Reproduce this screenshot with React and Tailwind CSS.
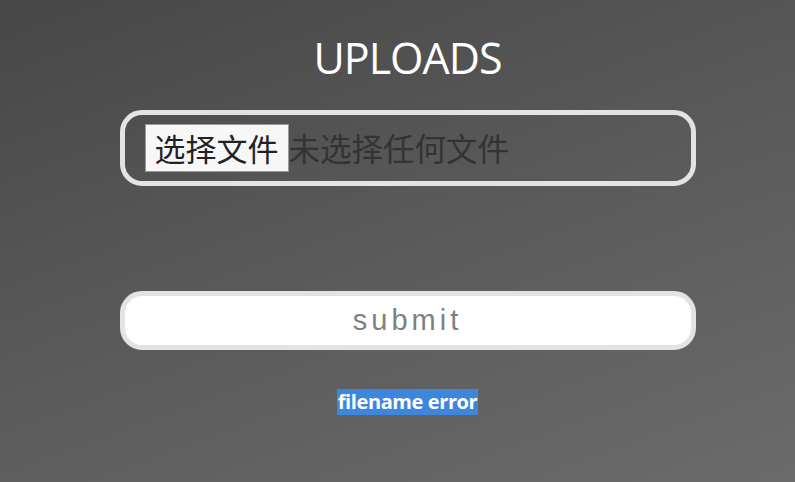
export default function App() {
  return (
    <div className="w-[795px] h-[482px] bg-[linear-gradient(160deg,#474747_0%,#5a5a5a_50%,#6b6b6b_100%)] flex flex-col items-center pl-[20px] font-['Segoe_UI','Open_Sans','Noto_Sans_CJK_SC',sans-serif]">
      <h1 className="mt-[30px] text-white text-[43px] leading-[56px] font-['Open_Sans',sans-serif] tracking-[-1px]">UPLOADS</h1>
      <div className="mt-[24px] w-[576px] h-[76px] border-[5px] border-[#e3e3e3] rounded-[22px] flex items-center pl-[20px]">
        <div className="h-[48px] px-[9px] bg-[#f7f7f7] border border-[#9a9a9a] flex items-center text-[31px] text-[#222] font-['Noto_Sans_CJK_SC',sans-serif]">选择文件</div>
        <span className="text-[31.5px] text-[#333] font-['Noto_Sans_CJK_SC',sans-serif]">未选择任何文件</span>
      </div>
      <div className="mt-[105px] w-[576px] h-[59px] border-[5px] border-[#e3e3e3] bg-white rounded-[22px] flex items-center justify-center">
        <span className="text-[29px] text-[#808080] tracking-[4px] font-['Liberation_Sans',sans-serif]">submit</span>
      </div>
      <div className="mt-[39px] bg-[#3d86dc] text-white font-bold text-[20px] leading-[26px] font-['Open_Sans',sans-serif] tracking-[-0.4px] px-[1px]">filename error</div>
    </div>
  );
}
